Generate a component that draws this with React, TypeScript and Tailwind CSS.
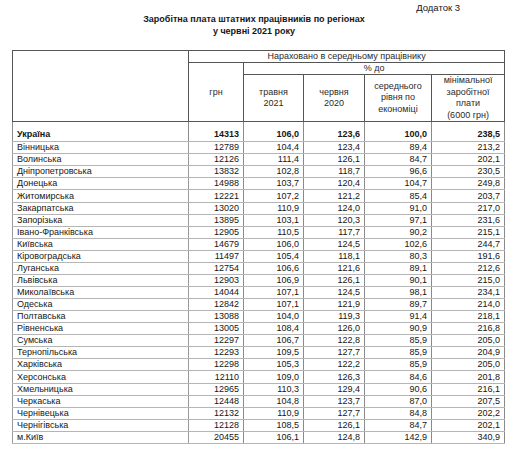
import React from 'react';

const rows: [string, string, string, string, string, string][] = [
  ['Вінницька', '12789', '104,4', '123,4', '89,4', '213,2'],
  ['Волинська', '12126', '111,4', '126,1', '84,7', '202,1'],
  ['Дніпропетровська', '13832', '102,8', '118,7', '96,6', '230,5'],
  ['Донецька', '14988', '103,7', '120,4', '104,7', '249,8'],
  ['Житомирська', '12221', '107,2', '121,2', '85,4', '203,7'],
  ['Закарпатська', '13020', '110,9', '124,0', '91,0', '217,0'],
  ['Запорізька', '13895', '103,1', '120,3', '97,1', '231,6'],
  ['Івано-Франківська', '12905', '110,5', '117,7', '90,2', '215,1'],
  ['Київська', '14679', '106,0', '124,5', '102,6', '244,7'],
  ['Кіровоградська', '11497', '105,4', '118,1', '80,3', '191,6'],
  ['Луганська', '12754', '106,6', '121,6', '89,1', '212,6'],
  ['Львівська', '12903', '106,9', '126,1', '90,1', '215,0'],
  ['Миколаївська', '14044', '107,1', '124,5', '98,1', '234,1'],
  ['Одеська', '12842', '107,1', '121,9', '89,7', '214,0'],
  ['Полтавська', '13088', '104,0', '119,3', '91,4', '218,1'],
  ['Рівненська', '13005', '108,4', '126,0', '90,9', '216,8'],
  ['Сумська', '12297', '106,7', '122,8', '85,9', '205,0'],
  ['Тернопільська', '12293', '109,5', '127,7', '85,9', '204,9'],
  ['Харківська', '12298', '105,3', '122,2', '85,9', '205,0'],
  ['Херсонська', '12110', '109,0', '126,3', '84,6', '201,8'],
  ['Хмельницька', '12965', '110,3', '129,4', '90,6', '216,1'],
  ['Черкаська', '12448', '104,8', '123,7', '87,0', '207,5'],
  ['Чернівецька', '12132', '110,9', '127,7', '84,8', '202,2'],
  ['Чернігівська', '12128', '108,5', '126,1', '84,7', '202,1'],
  ['м.Київ', '20455', '106,1', '124,8', '142,9', '340,9'],
];

// rows drawn a pixel taller in the scan
const tall = new Set(['Житомирська', 'Херсонська']);

const hd = 'border border-[#555] p-0 font-normal text-center align-middle';
const num = 'border-x border-x-[#8a8a8a] border-y border-y-[#b5b5b5] p-0 pr-[4px] text-right';

export default function App() {
  return (
    <div
      className="w-[506px] h-[450px] bg-white overflow-hidden text-[#161616]"
      style={{ fontFamily: '"Liberation Sans", Arial, sans-serif' }}
    >
      <div className="flex justify-end pr-[46px] pt-[2px] text-[9.5px] leading-[11px]">Додаток 3</div>
      <div className="text-center font-bold text-[9px] leading-[12px] pl-[2px]">
        <div>Заробітна плата штатних працівників по регіонах</div>
        <div>у червні 2021 року</div>
      </div>

      <table className="ml-[12px] mt-[13px] w-[492px] table-fixed border-collapse text-[9px] leading-[11px]">
        <colgroup>
          <col className="w-[176px]" />
          <col className="w-[55px]" />
          <col className="w-[60px]" />
          <col className="w-[61px]" />
          <col className="w-[67px]" />
          <col className="w-[73px]" />
        </colgroup>
        <thead className="text-[#2a2a2a]">
          <tr className="h-[12px]">
            <th rowSpan={3} className={hd}></th>
            <th colSpan={5} className={hd}>Нараховано в середньому працівнику</th>
          </tr>
          <tr className="h-[12px]">
            <th rowSpan={2} className={hd}>грн</th>
            <th colSpan={4} className={hd}>% до</th>
          </tr>
          <tr className="h-[46px]">
            <th className={hd}>травня<br />2021</th>
            <th className={hd}>червня<br />2020</th>
            <th className={`${hd} leading-[11.5px]`}>середнього<br />рівня по<br />економіці</th>
            <th className={`${hd} leading-[11.5px]`}>мінімальної<br />заробітної<br />плати<br />(6000 грн)</th>
          </tr>
        </thead>
        <tbody>
          <tr className="h-[20px] font-bold">
            <td className="border-x border-x-[#8a8a8a] border-b border-b-[#b5b5b5] p-0 pl-[4px] pb-[1px] align-bottom">Україна</td>
            {['14313', '106,0', '123,6', '100,0', '238,5'].map((v, i) => (
              <td key={i} className={`${num} pb-[1px] align-bottom`}>{v}</td>
            ))}
          </tr>
          {rows.map(([name, ...vals]) => (
            <tr key={name} className={tall.has(name) ? 'h-[13px]' : 'h-[12px]'}>
              <td className="border-x border-x-[#9a9a9a] border-y border-y-[#b5b5b5] p-0 pl-[4px] text-left">{name}</td>
              {vals.map((v, i) => (
                <td key={i} className={num}>{v}</td>
              ))}
            </tr>
          ))}
        </tbody>
      </table>
    </div>
  );
}
